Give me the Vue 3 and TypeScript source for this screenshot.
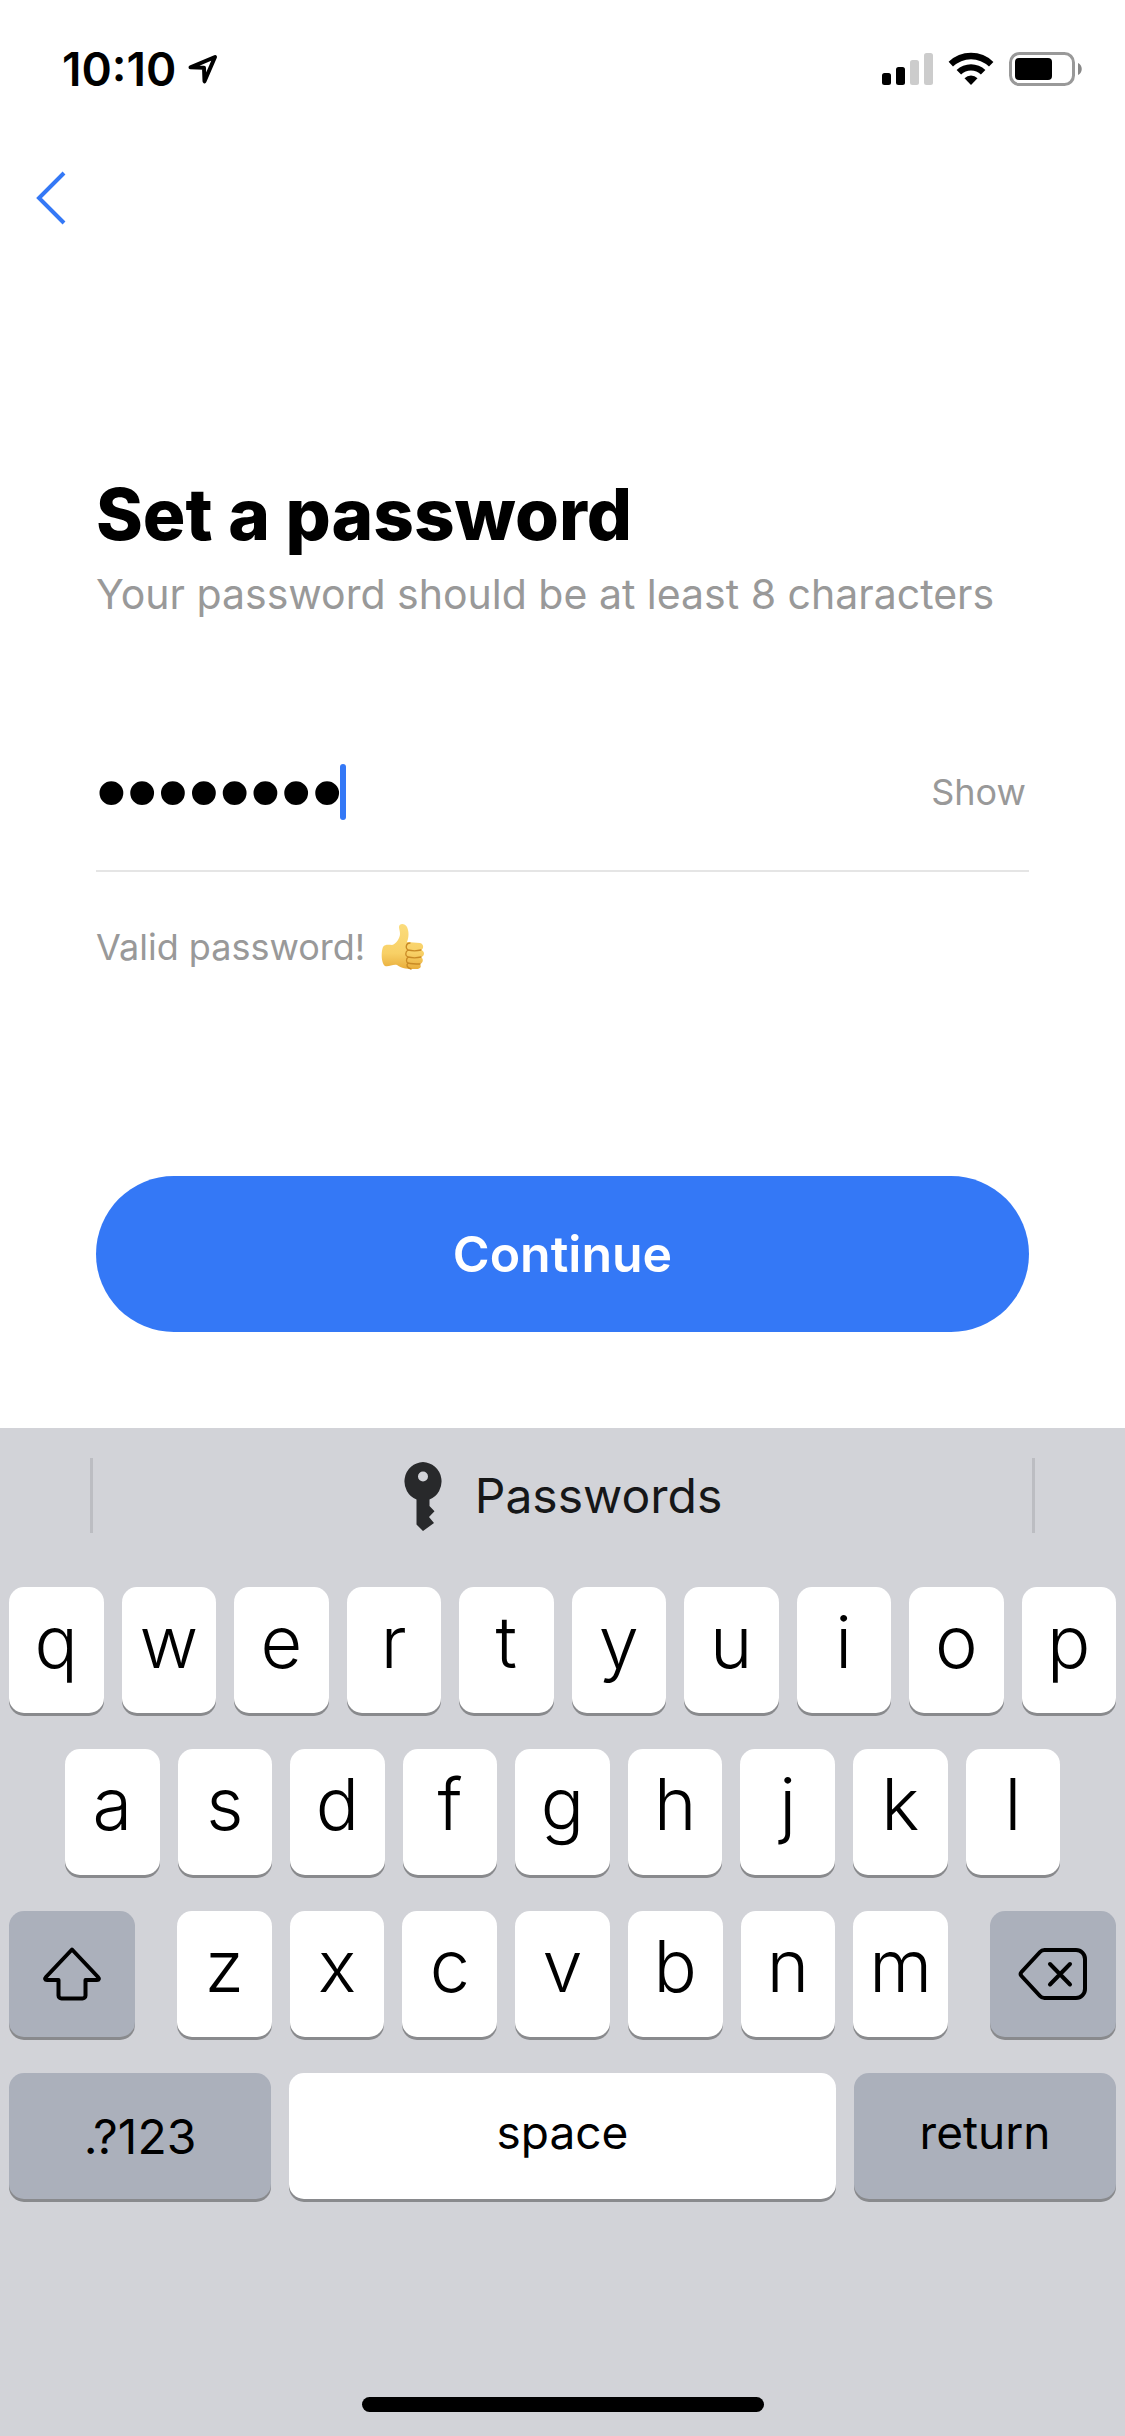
<script setup lang="ts">
import { computed, ref } from 'vue'

const password = ref('sunshine')
const visible = ref(false)
const isValid = computed(() => password.value.length >= 8)

const topRow: string[] = [...'qwertyuiop']
const middleRow: string[] = [...'asdfghjkl']
const bottomRow: string[] = [...'zxcvbnm']

function type(letter: string) {
  password.value += letter
}

function erase() {
  password.value = password.value.slice(0, -1)
}
</script>

<template>
  <div class="screen">
    <header class="status">
      <div class="clock">
        <span>10:10</span>
        <svg class="location" viewBox="0 0 30 30" aria-hidden="true">
          <path d="M2.5 13.3 27 3 16.5 27.3 16 13.8Z" />
        </svg>
      </div>
      <div class="indicators">
        <svg width="51" height="34" viewBox="0 0 51 34" aria-hidden="true">
          <rect x="0" y="21" width="9" height="12" rx="2.5" />
          <rect x="14" y="15" width="9" height="18" rx="2.5" />
          <rect x="28" y="8" width="9" height="25" rx="2.5" fill="#ccc" />
          <rect x="42" y="1" width="9" height="32" rx="2.5" fill="#ccc" />
        </svg>
        <svg width="46" height="34" viewBox="0 0 46 34" aria-hidden="true">
          <path d="M0.6 9.8a32 32 0 0 1 44.8 0.1L41 14.6a25.800 25.800 0 0 0-36 0Z" />
          <path d="M8.600 18a20.600 20.600 0 0 1 28.800 0l-4.500 4.600a14.200 14.200 0 0 0-19.800 0Z" />
          <path d="M16.500 26.200a9.400 9.400 0 0 1 13 0L23 33Z" />
        </svg>
        <svg width="74" height="34" viewBox="0 0 74 34" aria-hidden="true">
          <rect x="1.500" y="1.500" width="63" height="31" rx="9" fill="none" stroke="#999" stroke-width="3" />
          <rect x="6" y="6" width="37" height="22" rx="4" />
          <path d="M69 11c5 2 5 10 0 12Z" fill="#888" />
        </svg>
      </div>
    </header>

    <nav class="nav">
      <button class="back" type="button" aria-label="Back">
        <svg width="32" height="56" viewBox="0 0 32 56" aria-hidden="true">
          <path d="M29 3 4 28l25 25" />
        </svg>
      </button>
    </nav>

    <main class="content">
      <h1>Set a password</h1>
      <label class="hint" for="password">Your password should be at least 8 characters</label>

      <div class="field">
        <input
          id="password"
          v-model="password"
          :class="{ masked: !visible }"
          :type="visible ? 'text' : 'password'"
          autocomplete="new-password"
        />
        <span class="caret"></span>
        <button class="show" type="button" @click="visible = !visible">Show</button>
      </div>

      <p class="message">
        <template v-if="isValid">
          <span>Valid password!</span>
          <svg width="44" height="46" viewBox="0 0 44 46" role="img" aria-label="Thumbs up">
            <defs>
              <linearGradient id="skin" x1="0" y1="0" x2="0" y2="1">
                <stop offset="0" stop-color="#fbdc7c" />
                <stop offset="0.650" stop-color="#f8d066" />
                <stop offset="1" stop-color="#e9ae3c" />
              </linearGradient>
            </defs>
            <path
              fill="url(#skin)"
              d="M2 23c2-3 6-2 9-2 4-1 8-7 8-11 0-3-1-5-1-7 0-4 6-4 8 0 2 5 2 9 0 15l13 1c4 1 4 6 1 7 4 1 4 6 0 7 3 2 2 6-1 7 2 3 0 5-4 5-8 0-14 0-19-4-4-1-8 2-12 1-4-3-4-14-2-19Z"
            />
            <path
              fill="none"
              stroke="#c98a25"
              stroke-width="1.300"
              stroke-linecap="round"
              d="M40 26c-4 1-9 1-13 0M40 33c-4 1-9 1-13 0M39 40c-4 0-8 0-12-1M29 19c-4 0-5 5-2 7-3 2-3 6 0 7-2 2-2 5 0 6-2 2-1 5 3 6"
            />
          </svg>
        </template>
      </p>

      <button class="continue" type="button" :disabled="!isValid">Continue</button>
    </main>

    <section class="keyboard" aria-label="Keyboard">
      <div class="suggestions">
        <span class="divider"></span>
        <button class="passwords" type="button">
          <svg width="40" height="70" viewBox="0 0 40 70" aria-hidden="true">
            <path
              fill-rule="evenodd"
              d="M20 1a19.500 19.500 0 0 1 6.500 37.500V45l5 5.300-5.500 5.700 5 6L20 70l-6.500-6.500v-25A19.500 19.500 0 0 1 20 1Zm0 9.500a5 5 0 1 0 0 10 5 5 0 0 0 0-10Z"
            />
          </svg>
          <span>Passwords</span>
        </button>
        <span class="divider"></span>
      </div>

      <div class="keys">
        <div class="row">
          <button v-for="k in topRow" :key="k" class="key letter" type="button" @click="type(k)">{{ k }}</button>
        </div>
        <div class="row inset">
          <button v-for="k in middleRow" :key="k" class="key letter" type="button" @click="type(k)">{{ k }}</button>
        </div>
        <div class="row modifiers">
          <button class="key dark" type="button" aria-label="Shift">
            <svg width="60" height="56" viewBox="0 0 60 56" aria-hidden="true">
              <path d="M30 3.500 56 31c1.500 1.600 1 3-1 3H43.500v15.500a3 3 0 0 1-3 3h-21a3 3 0 0 1-3-3V34H5c-2 0-2.500-1.400-1-3Z" />
            </svg>
          </button>
          <div class="row">
            <button v-for="k in bottomRow" :key="k" class="key letter" type="button" @click="type(k)">{{ k }}</button>
          </div>
          <button class="key dark" type="button" aria-label="Delete" @click="erase">
            <svg width="70" height="54" viewBox="0 0 70 54" aria-hidden="true">
              <path d="M26.500 3H58a9 9 0 0 1 9 9v30a9 9 0 0 1-9 9H26.500a6 6 0 0 1-4.500-2L3.500 29a3 3 0 0 1 0-4L22 5a6 6 0 0 1 4.500-2Z" />
              <path d="m32 17 20 20.500M52 17 32 37.500" />
            </svg>
          </button>
        </div>
        <div class="actions">
          <button class="key dark" type="button">.?123</button>
          <button class="key word" type="button" @click="type(' ')">space</button>
          <button class="key dark word" type="button">return</button>
        </div>
      </div>

      <div class="home"></div>
    </section>
  </div>
</template>

<style>
body {
  background: #fff;
}
</style>

<style scoped>
.screen {
  display: flex;
  flex-direction: column;
  min-height: 100vh;
  font-family: Inter, "Liberation Sans", sans-serif;
  color: #000;
}

button,
input {
  margin: 0;
  padding: 0;
  border: 0;
  background: none;
  font: inherit;
  color: inherit;
  outline: none;
}

svg {
  display: block;
  flex: none;
}

.status {
  display: flex;
  align-items: center;
  justify-content: space-between;
  height: 138px;
  padding: 0 42px 0 62px;
}

.clock {
  display: flex;
  align-items: center;
  gap: 12px;
  font-size: 46px;
  font-weight: 600;
}

.location {
  width: 30px;
  height: 30px;
  fill: none;
  stroke: #000;
  stroke-width: 4;
  stroke-linejoin: round;
}

.indicators {
  display: flex;
  align-items: center;
  gap: 15px;
}

.nav {
  display: flex;
  align-items: center;
  height: 120px;
  padding: 0 35px;
}

.back path {
  fill: none;
  stroke: #3478f6;
  stroke-width: 4;
}

.content {
  display: flex;
  flex-direction: column;
  padding: 214px 96px 96px;
}

h1 {
  margin: 0;
  font-size: 71px;
  font-weight: 800;
  line-height: 84px;
}

.hint {
  margin-top: 12px;
  font-size: 41px;
  line-height: 52px;
  color: #999;
}

.field {
  display: flex;
  align-items: center;
  margin-top: 144px;
  padding-bottom: 50px;
  border-bottom: 2px solid #e5e5e5;
}

.field input {
  width: 244px;
  height: 56px;
  font-size: 48px;
}

.field .masked {
  font-family: "Liberation Sans", sans-serif;
  font-size: 88px;
  line-height: 56px;
}

.caret {
  width: 6px;
  height: 56px;
  border-radius: 3px;
  background: #3478f6;
}

.show {
  margin: 0 3px 0 auto;
  font-size: 36px;
  color: #999;
}

.message {
  display: flex;
  align-items: center;
  gap: 16px;
  height: 48px;
  margin: 51px 0 0;
  font-size: 36px;
  color: #999;
}

.continue {
  height: 156px;
  margin-top: 205px;
  border-radius: 78px;
  background: #3478f6;
  font-size: 50px;
  font-weight: 600;
  color: #fff;
}

.keyboard {
  display: flex;
  flex: 1;
  flex-direction: column;
  padding-bottom: 24px;
  background: #d2d3d8;
}

.suggestions {
  display: flex;
  align-items: center;
  justify-content: space-between;
  height: 135px;
  padding: 0 90px;
}

.divider {
  width: 3px;
  height: 75px;
  background: #bcbdc2;
}

.passwords {
  display: flex;
  align-items: center;
  gap: 32px;
  font-size: 48px;
  color: #161718;
}

.passwords svg {
  fill: #28292b;
}

.keys {
  display: flex;
  flex-direction: column;
  gap: 36px;
  padding: 24px 9px 0;
}

.row {
  display: flex;
  gap: 18px;
}

.row > .letter {
  flex: 1;
}

.inset {
  padding: 0 56px;
}

.modifiers {
  gap: 42px;
}

.modifiers > .row {
  flex: 1;
}

.modifiers > .dark {
  width: 126px;
}

.actions {
  display: grid;
  grid-template-columns: 262px 1fr 262px;
  gap: 18px;
}

.key {
  display: flex;
  align-items: center;
  justify-content: center;
  height: 126px;
  border-radius: 15px;
  background: #fff;
  box-shadow: 0 3px 0 #898a8d;
  font-size: 48px;
}

.letter {
  padding-bottom: 18px;
  font-size: 72px;
  font-weight: 350;
}

.dark {
  background: #abb0bb;
}

.word {
  padding-bottom: 8px;
  font-size: 46px;
}

.key path {
  fill: none;
  stroke: #000;
  stroke-width: 4;
  stroke-linecap: round;
  stroke-linejoin: round;
}

.home {
  width: 402px;
  height: 15px;
  margin: auto auto 0;
  border-radius: 8px;
  background: #000;
}
</style>
